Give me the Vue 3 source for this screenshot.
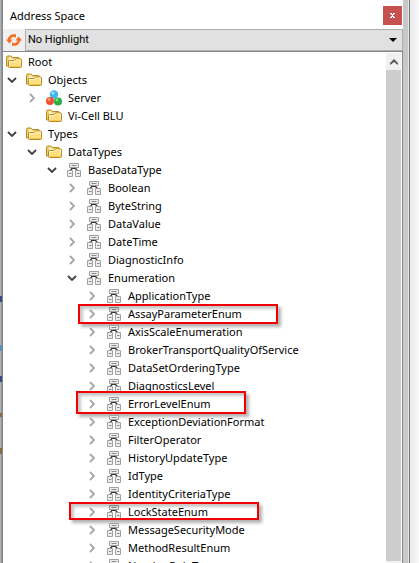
<script setup>
import { ref } from 'vue'

const highlight = ref('No Highlight')
const rows = [
  { label: 'Root', level: 0, icon: 'folder' },
  { label: 'Objects', level: 1, icon: 'folder', state: 'open' },
  { label: 'Server', level: 2, icon: 'object', state: 'closed' },
  { label: 'Vi-Cell BLU', level: 2, icon: 'folder' },
  { label: 'Types', level: 1, icon: 'folder', state: 'open' },
  { label: 'DataTypes', level: 2, icon: 'folder', state: 'open' },
  { label: 'BaseDataType', level: 3, icon: 'type', state: 'open' },
  ...['Boolean', 'ByteString', 'DataValue', 'DateTime', 'DiagnosticInfo'].map((label) => ({
    label, level: 4, icon: 'type', state: 'closed',
  })),
  { label: 'Enumeration', level: 4, icon: 'type', state: 'open' },
  ...['ApplicationType', 'AssayParameterEnum', 'AxisScaleEnumeration', 'BrokerTransportQualityOfService',
    'DataSetOrderingType', 'DiagnosticsLevel', 'ErrorLevelEnum', 'ExceptionDeviationFormat',
    'FilterOperator', 'HistoryUpdateType', 'IdType', 'IdentityCriteriaType', 'LockStateEnum',
    'MessageSecurityMode', 'MethodResultEnum', 'NamingRuleType'].map((label) => ({
    label, level: 5, icon: 'type', state: 'closed',
  })),
]
const marks = { AssayParameterEnum: 'mark-assay', ErrorLevelEnum: 'mark-error', LockStateEnum: 'mark-lock' }
</script>

<template>
  <div class="window">
    <div class="edge-left"></div>
    <main class="dock">
      <header class="title">
        <h1>Address Space</h1>
        <button class="close" aria-label="Close">
          <svg width="5" height="5" viewBox="0 0 5 5" shape-rendering="crispEdges"><path d="M0 0h2v1h1V0h2v1H4v1H3v1h1v1h1v1H3V4H2v1H0V4h1V3h1V2H1V1H0z" fill="#fff" /></svg>
        </button>
      </header>
      <div class="toolbar">
        <button class="refresh" aria-label="Refresh">
          <svg width="16" height="14" viewBox="0 0 16 14">
            <g fill="none" stroke="#fb6a1c" stroke-width="2.6"><path d="M3 7.500C3 4 5.500 2 9.500 2.600" /><path d="M13 6.500c0 3.500-2.500 5.500-6.500 4.900" /></g>
            <path d="M0 6.500h6.500L3.300 10.500zM16 7.500H9.500L12.700 3.500z" fill="#fb6a1c" />
            <path d="M6 13.500V9l1.500 1.500zM10 .5V5L8.500 3.500z" fill="#fb6a1c" />
          </svg>
        </button>
        <select v-model="highlight" aria-label="Highlight">
          <option>No Highlight</option>
        </select>
        <svg class="arrow" width="8" height="4" viewBox="0 0 8 4" aria-hidden="true"><path d="M0 0h8L4 4z" fill="#000" /></svg>
      </div>
      <div class="view">
        <ul class="tree">
          <li v-for="row in rows" :key="row.label" :class="'level-' + row.level">
            <button v-if="row.state" :class="['expander', row.state]" :aria-label="'Toggle ' + row.label">
              <svg v-if="row.state === 'open'" width="10" height="6" viewBox="0 0 10 6"><path d="M1 1l4 4 4-4" fill="none" stroke="#404040" stroke-width="1.8" /></svg>
              <svg v-else width="6" height="10" viewBox="0 0 6 10"><path d="M1 1l4 4-4 4" fill="none" stroke="#a6a6a6" stroke-width="1.8" /></svg>
            </button>
            <svg v-if="row.icon === 'folder'" class="icon" width="16" height="16" viewBox="0 0 16 16">
              <path d="M.5 12V3.500Q.5 2 2 2h2.500Q5.500 2 6 3l.5.500h5.500Q13.500 3.500 13.500 5v7z" fill="#f0cf6a" stroke="#b58a22" />
              <path d="M3 6V3.500h2L6 5h6v1z" fill="#fff6d0" />
              <path d="M3.500 13.500q-1 0-1-1V7.500q0-1 1-1H8L9.500 5h5q1 0 1 1v6.500q0 1-1 1z" fill="#ffdf82" stroke="#b58a22" />
              <path d="M3.500 11V7.500h5L10 6h4.500v3" fill="none" stroke="#fff4c4" />
              <path d="M4 12.500h10.500" stroke="#f5c94f" />
            </svg>
            <svg v-else-if="row.icon === 'object'" class="icon" width="16" height="16" viewBox="0 0 16 16">
              <circle cx="8" cy="4.500" r="4.200" fill="#42b4ee" /><circle cx="4" cy="11" r="4" fill="#ef5130" /><circle cx="12" cy="11.500" r="4" fill="#29ad43" />
              <circle cx="7" cy="3" r="1.500" fill="#a5e2ff" /><circle cx="3" cy="9.500" r="1.400" fill="#ffa384" /><circle cx="11" cy="10" r="1.400" fill="#89df8e" />
            </svg>
            <svg v-else class="icon" width="16" height="16" viewBox="0 0 16 16">
              <path d="M4 8.500L6.500 6M11.500 8.500L9 6M5 6.500h5.500" fill="none" stroke="#333" stroke-width="1.2" />
              <g fill="#ededed" stroke="#a0a0a0"><path d="M3.500 1.500h9v4h-9zM1.500 8.500h5v6h-5zM9.500 8.500h5v6h-5z" /></g>
              <path d="M5.500 3.500h5M3 11.500h2.500M11 11.500h2.500" stroke="#8a8a8a" />
            </svg>
            <span class="label">{{ row.label }}</span>
            <span v-if="marks[row.label]" :class="['mark', marks[row.label]]"></span>
          </li>
        </ul>
        <div class="scrollbar">
          <div class="up"><svg width="8" height="6" viewBox="0 0 8 6"><path d="M0 6V4l4-4 4 4v2L4 3z" fill="#555" /></svg></div>
          <div class="thumb"></div>
        </div>
      </div>
    </main>
    <div class="edge-right"></div>
    <div class="outside"></div>
  </div>
</template>

<style>
body { margin: 0; overflow: hidden; }
</style>

<style scoped>
* { box-sizing: border-box; }
.window { display: flex; height: 100vh; overflow: hidden; font: 11px/18px "Noto Sans", "Open Sans", sans-serif; color: #000; background: #fff; }
.edge-left {
  flex: 0 0 2px;
  background:
    linear-gradient(#3d4a80, #3d4a80) 0 296px / 2px 6px no-repeat,
    linear-gradient(#5b93b8, #5b93b8) 0 345px / 2px 6px no-repeat,
    linear-gradient(#3d4a80, #3d4a80) 0 376px / 2px 6px no-repeat,
    linear-gradient(#8a6a3f, #8a6a3f) 0 413px / 2px 4px no-repeat,
    linear-gradient(#8a6a3f, #8a6a3f) 0 448px / 2px 6px no-repeat,
    linear-gradient(90deg, #b0b0b0 1px, #90979f 1px);
}
.dock { flex: 1; min-width: 0; display: flex; flex-direction: column; border-left: 1px solid #828790; }
.title { flex: 0 0 29px; display: flex; align-items: center; justify-content: space-between; padding: 2px 1px 0 7px; }
h1 { margin: 0; font-size: 11px; font-weight: 400; }
button { border: 0; padding: 0; background: none; display: flex; align-items: center; justify-content: center; }
.close { width: 19px; height: 19px; background: #c75050; }
.toolbar { position: relative; flex: 0 0 22px; display: flex; background: #f0f0f0; }
.refresh { width: 22px; }
select { flex: 1; min-width: 0; appearance: none; border: 1px solid #adadad; border-radius: 0; background: #e1e1e1; padding: 0 20px 0 2px; font: 11px/18px Roboto, sans-serif; color: #000; }
.arrow { position: absolute; right: 6px; top: 9px; pointer-events: none; }
.view { flex: 1; min-height: 0; display: flex; border: solid #828790; border-width: 1px 1px 0 0; padding: 1px 1px 0 0; }
.tree { flex: 1; min-width: 0; margin: 0; padding: 0 0 0 3px; list-style: none; }
li { position: relative; display: flex; height: 18px; align-items: center; white-space: nowrap; }
.level-1 { padding-left: 20px; }
.level-2 { padding-left: 40px; }
.level-3 { padding-left: 60px; }
.level-4 { padding-left: 80px; }
.level-5 { padding-left: 100px; }
.expander { width: 20px; height: 18px; margin-left: -20px; padding-right: 8px; }
.icon { flex: none; margin-right: 6px; }
.mark { position: absolute; border: 2px solid #f00000; box-shadow: 3px 3px 3px rgba(0, 0, 0, .3), inset 3px 3px 3px rgba(0, 0, 0, .22); }
.mark-assay { left: 72px; top: -1px; width: 200px; height: 20px; }
.mark-error { left: 70px; top: -4px; width: 170px; height: 23px; }
.mark-lock { left: 63px; top: -1px; width: 190px; height: 18px; }
.scrollbar { flex: 0 0 15px; display: flex; flex-direction: column; background: #f0f0f0; padding-bottom: 2px; }
.up { height: 17px; display: flex; align-items: center; justify-content: center; }
.thumb { flex: 1; background: #cdcdcd; }
.edge-right { flex: 0 0 7px; background: #c8c8c8; border-right: 1px solid #777b80; box-shadow: inset -1px 0 #e4e4e4; }
.outside { flex: 0 0 9px; background: linear-gradient(90deg, #e8e8e8, #fafafa); }
</style>
